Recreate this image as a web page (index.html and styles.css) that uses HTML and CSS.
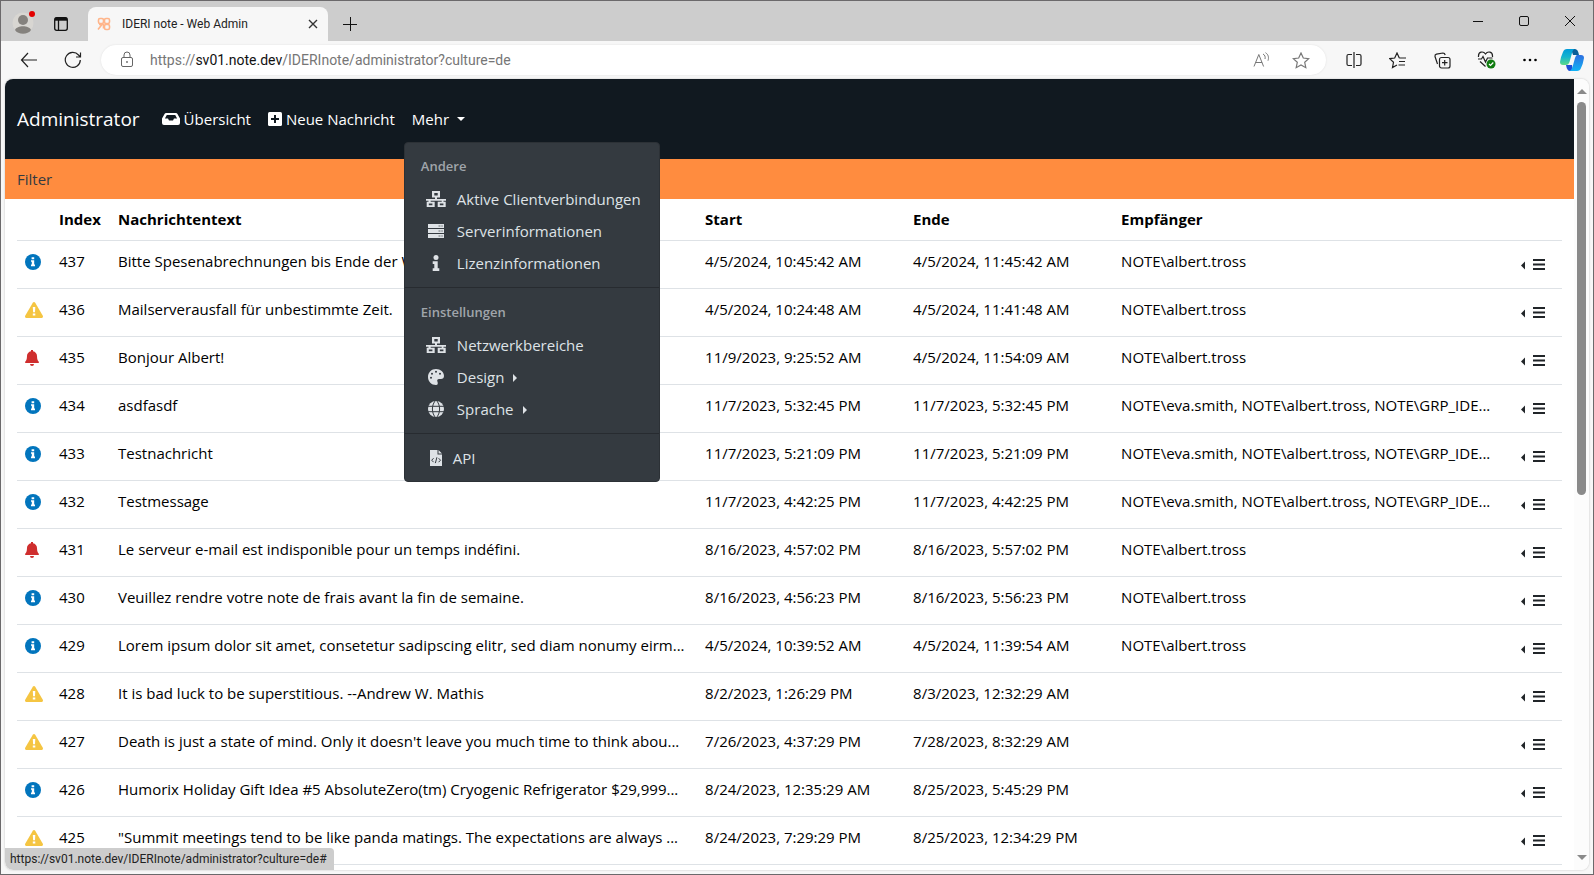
FILE: index.html
```html
<!DOCTYPE html>
<html lang="de">
<head>
<meta charset="utf-8">
<title>IDERI note - Web Admin</title>
<link rel="stylesheet" href="styles.css">
</head>
<body>
<svg class="sprite" aria-hidden="true">
  <symbol id="i-info" viewBox="0 0 16 16"><circle cx="8" cy="8" r="8" fill="#0275bd"/><path fill="#fff" d="M6.600 3.200h2.600v2H6.600zM6 6.200h3.200v4.400H10v1.600H6v-1.600h.8V7.800H6z"/></symbol>
  <symbol id="i-warn" viewBox="0 0 18 16"><path fill="#f5c542" d="M9 0c.5 0 .9.200 1.200.700l7.600 13c.5 1-.1 2.300-1.300 2.300h-15C.3 16-.3 14.700.200 13.700l7.600-13C8.100.200 8.500 0 9 0z"/><path fill="#fff" d="M7.800 5h2.500L10 10.200H8.100zM7.800 11.400h2.500v2.100H7.800z"/></symbol>
  <symbol id="i-bell" viewBox="0 0 14 16"><path fill="#cf2e2e" d="M6 0h2v1.200C10.300 1.700 12 3.500 12 6c0 3.500 1 5 1.800 5.800.4.500.2 1.200-.6 1.200H.8c-.8 0-1-.700-.6-1.200C1 11 2 9.500 2 6c0-2.500 1.700-4.300 4-4.800zM5 14h4a2 2 0 0 1-4 0z"/></symbol>
  <symbol id="i-net" viewBox="0 0 20 16"><path d="M6 0h8v6.500h-3V8h9v1.700h-2.500v1h2.200V16h-8v-5.300h4v-1h-11v1h4V16h-8v-5.300h1.800v-1H0V8h9V6.500H6zM8.300 2v2.500h3.400V2zM2.800 12.500v1.700h3.600v-1.700zm11 0v1.700h3.600v-1.700z" fill-rule="evenodd"/></symbol>
  <symbol id="i-server" viewBox="0 0 18 16"><path d="M1 1h16v4H1zM1 6h16v4H1zM1 11h16v4H1z"/><path fill="#8f9499" d="M11.500 2.300h2v1.400h-2zm2.800 0h1.500v1.400h-1.500zm-2.800 5h2v1.400h-2zm2.800 0h1.500v1.400h-1.500zm-2.800 5h2v1.400h-2zm2.800 0h1.500v1.400h-1.500z"/></symbol>
  <symbol id="i-i" viewBox="0 0 16 16"><circle cx="8" cy="2.500" r="2.500"/><path d="M4.700 6.200h5v7h1.600V16H4.700v-2.800h1.600V9H4.700z"/></symbol>
  <symbol id="i-palette" viewBox="0 0 16 16"><path fill-rule="evenodd" d="M8 0c4.500 0 8 3.100 8 7 0 1.700-1.200 3-3 3h-2c-1.500 0-2.200 1.300-1.600 2.500.7 1.700.6 3.500-1.400 3.500C3.500 16 0 12.500 0 8s3.500-8 8-8zM3 7.800a1 1 0 1 0 0 2 1 1 0 0 0 0-2zm1-4a1 1 0 1 0 0 2 1 1 0 0 0 0-2zm4-2a1 1 0 1 0 0 2 1 1 0 0 0 0-2zm4 2a1 1 0 1 0 0 2 1 1 0 0 0 0-2z"/></symbol>
  <symbol id="i-globe" viewBox="0 0 16 16"><circle cx="8" cy="8" r="8"/><path fill="none" stroke="#343a40" d="M0 5.300h16M0 10.700h16M8-1C3.200 3.500 3.200 12.500 8 17M8-1c4.800 4.500 4.800 13.500 0 18"/></symbol>
  <symbol id="i-file" viewBox="0 0 16 16"><path d="M2 0h7.500v4.500H14V16H2zM10.500 0 14 3.500h-3.500z"/><path fill="none" stroke="#343a40" d="m5.600 8.200-1.900 2 1.900 2M8.900 7.300l-1.500 5.800M10.600 8.200l1.900 2-1.900 2"/></symbol>
  <symbol id="i-lines" viewBox="0 0 24 12"><path fill="#212529" d="M0 7.500 4 3.500v8zM12 1h12v2H12zm0 4.500h12v2H12zM12 10h12v2H12z"/></symbol>
</svg>
<div class="window">
  <header class="tabs">
    <button class="icon-btn" aria-label="Profil"><svg width="24" height="24" viewBox="0 0 24 24"><circle cx="11" cy="13" r="10.500" fill="#d8d6d2"/><circle cx="11" cy="10" r="5" fill="#85827e"/><path d="M3 20c2-5 14-5 16 0-3 5-13 5-16 0z" fill="#85827e"/><circle cx="20" cy="4" r="3" fill="#e30000"/></svg></button>
    <button class="icon-btn" aria-label="Tabs"><svg width="16" height="16" viewBox="0 0 16 16" fill="none" stroke="#111" stroke-width="1.300"><rect x="1.700" y="1.700" width="12.600" height="12.600" rx="2"/><path d="M5.500 4v10"/><path d="M2 3.200h12" stroke-width="3"/></svg></button>
    <div class="tab">
      <svg width="14" height="14" viewBox="0 0 14 14" fill="none" stroke="#ffb58a" stroke-width="1.600"><rect x="1.500" y="1.500" width="5" height="5" rx="1.500"/><rect x="7.500" y="1.500" width="5" height="5" rx="1.500"/><path d="M1 12.500 5 7.500M2 7.500h4.500v4"/><rect x="7.500" y="7.500" width="5" height="5" rx="1.500"/></svg>
      <span class="tab-title">IDERI note - Web Admin</span>
      <button class="icon-btn" aria-label="Tab schließen"><svg width="10" height="10" viewBox="0 0 10 10" stroke="#333" stroke-width="1.400"><path d="m1 1 8 8M9 1 1 9"/></svg></button>
    </div>
    <button class="icon-btn new-tab" aria-label="Neuer Tab"><svg width="14" height="14" viewBox="0 0 14 14" stroke="#111"><path d="M0 7.500h14M7.500 0v14"/></svg></button>
    <div class="win-btns">
      <button class="icon-btn" aria-label="Minimieren"><svg width="12" height="12" viewBox="0 0 12 12" stroke="#111"><path d="M1 6.500h10"/></svg></button>
      <button class="icon-btn" aria-label="Maximieren"><svg width="12" height="12" viewBox="0 0 12 12" fill="none" stroke="#111"><rect x="1.500" y="1.500" width="9" height="9" rx="1.500"/></svg></button>
      <button class="icon-btn" aria-label="Schließen"><svg width="12" height="12" viewBox="0 0 12 12" stroke="#111"><path d="m1 1 10 10M11 1 1 11"/></svg></button>
    </div>
  </header>
  <div class="toolbar">
    <button class="icon-btn" aria-label="Zurück"><svg width="18" height="16" viewBox="0 0 18 16" fill="none" stroke="#222" stroke-width="1.200"><path d="M17 8H1.500M8 1 1.500 8 8 15"/></svg></button>
    <button class="icon-btn" aria-label="Neu laden"><svg width="18" height="18" viewBox="0 0 18 18" fill="none" stroke="#222" stroke-width="1.200"><path d="M16.300 9A7.500 7.500 0 1 1 14.500 4L16.500 6M16.500 1.500V6H12"/></svg></button>
    <div class="address">
      <svg width="14" height="18" viewBox="0 0 14 18" fill="none" stroke="#666"><rect x="1.500" y="6.500" width="11" height="9" rx="1.500"/><path d="M4 6.500V4a3 3 0 0 1 6 0v2.500"/><circle cx="7" cy="11" r=".6"/></svg>
      <span class="url">https://<b>sv01.note.dev</b>/IDERInote/administrator?culture=de</span>
      <button class="icon-btn" aria-label="Vorlesen"><svg width="17" height="16" viewBox="0 0 17 16" fill="none" stroke="#777"><path d="m1 14.500 4.800-12 4.800 12M2.600 10.500h6.500M10 2c2 1 2.500 3 2 5M12.500.700c3 1.800 3.500 5 2.500 8"/></svg></button>
      <button class="icon-btn" aria-label="Favorit"><svg width="18" height="17" viewBox="0 0 18 17" fill="none" stroke="#777" stroke-width="1.200"><path d="m9 1 2.300 5 5.400.600-4 3.700 1.100 5.400L9 13l-4.800 2.700 1.100-5.400-4-3.700 5.400-.6z"/></svg></button>
    </div>
    <div class="tools">
      <button class="icon-btn" aria-label="Geteilter Bildschirm"><svg width="16" height="16" viewBox="0 0 16 16" fill="none" stroke="#222" stroke-width="1.200"><path d="M6 2.500H2.500q-1.500 0-1.500 1.500v8q0 1.500 1.500 1.500H6M10 2.500h3.500Q15 2.500 15 4v8q0 1.500-1.500 1.500H10M8 0v16"/></svg></button>
      <button class="icon-btn" aria-label="Favoriten"><svg width="18" height="17" viewBox="0 0 18 17" fill="none" stroke="#222" stroke-width="1.200"><path d="M10.300 6 8 1 5.700 6l-5 .600 3.800 3.700-1 5.200L8 13M10.300 6H17M10 9.500h6M9.500 13H16"/></svg></button>
      <button class="icon-btn" aria-label="Sammlungen"><svg width="17" height="17" viewBox="0 0 17 17" fill="none" stroke="#222" stroke-width="1.200"><rect x="5.500" y="5.500" width="10.500" height="10.500" rx="2"/><path d="M10.700 8v5.500M8 10.700h5.500M3.500 12 1 4.500Q.7 2.700 2.500 2.200L9 1q1.700 0 2.200 2"/></svg></button>
      <button class="icon-btn" aria-label="Browser-Essentials"><svg width="19" height="18" viewBox="0 0 19 18" fill="none" stroke="#222" stroke-width="1.200"><path d="M1.500 6C1 0 6.500 0 8.500 3c2-3 7.500-3 7 3M1 8h3.500L6 5.500 8.500 11 10.500 7h5M3 10.500l5.500 5"/><circle cx="14" cy="13" r="4.500" fill="#107c10" stroke="none"/><path d="m12 13 1.500 1.500L16.300 11.500" stroke="#fff"/></svg></button>
      <button class="icon-btn" aria-label="Einstellungen"><svg width="16" height="4" viewBox="0 0 16 4"><circle cx="2.500" cy="2" r="1.300"/><circle cx="8" cy="2" r="1.300"/><circle cx="13.500" cy="2" r="1.300"/></svg></button>
      <button class="icon-btn copilot" aria-label="Copilot"><svg width="24" height="24" viewBox="0 0 24 24"><defs><linearGradient id="ca" x2="0" y2="1"><stop stop-color="#009bd9"/><stop offset=".5" stop-color="#15b5cf"/><stop offset="1" stop-color="#5dda87"/></linearGradient><linearGradient id="cb" x2="0" y2="1"><stop stop-color="#2e6fe0"/><stop offset="1" stop-color="#12b3f5"/></linearGradient></defs><path fill="#0c5f98" d="M11 1h4q3 0 4 6h-6z"/><path fill="url(#ca)" d="M7 1h8q-2 0-3 4L9.500 14Q8.500 17 6 17H3q-3 0-3-3 1-6 3-10 1-3 4-3z"/><path fill="#1d4fd7" d="M6 17h6l1 6h-3q-3 0-4-6z"/><path fill="url(#cb)" d="M17 7h4q3 0 3 3-1 6-3 10-1 3-4 3H9.500q2-1 3-4L15 10q1-3 2-3z"/></svg></button>
    </div>
  </div>
  <div class="viewport">
    <div class="page">
      <nav class="navbar">
        <a class="brand" href="#">Administrator</a>
        <a href="#"><svg width="18" height="14" viewBox="0 0 18 14" fill="#fff"><path fill-rule="evenodd" d="M4 1h10q.8 0 1.300.800L18 6.500V11q0 2-2 2H2q-2 0-2-2V6.500L2.700 1.800Q3.200 1 4 1zm.800 2L2.900 6.500H6L7 8.500h4L12 6.500h3.100L13.200 3z"/></svg>Übersicht</a>
        <a href="#"><svg width="14" height="14" viewBox="0 0 14 14"><rect width="14" height="14" rx="1.500" fill="#fff"/><path d="M7 3v8M3 7h8" stroke="#111920" stroke-width="2"/></svg>Neue Nachricht</a>
        <div class="more">
          <a href="#" class="more-link">Mehr<span class="caret"></span></a>
          <div class="menu">
            <h6>Andere</h6>
            <a href="#"><svg width="20" height="16"><use href="#i-net"/></svg>Aktive Clientverbindungen</a>
            <a href="#"><svg width="20" height="16"><use href="#i-server"/></svg>Serverinformationen</a>
            <a href="#"><svg width="20" height="16"><use href="#i-i"/></svg>Lizenzinformationen</a>
            <hr>
            <h6>Einstellungen</h6>
            <a href="#"><svg width="20" height="16"><use href="#i-net"/></svg>Netzwerkbereiche</a>
            <a href="#"><svg width="20" height="16"><use href="#i-palette"/></svg>Design<span class="caret-r"></span></a>
            <a href="#"><svg width="20" height="16"><use href="#i-globe"/></svg>Sprache<span class="caret-r"></span></a>
            <hr>
            <a href="#" class="api"><svg width="20" height="16"><use href="#i-file"/></svg>API</a>
          </div>
        </div>
      </nav>
      <div class="filter">Filter</div>
      <main class="content">
        <table>
          <colgroup><col class="c-icon"><col class="c-index"><col class="c-text"><col class="c-date"><col class="c-date"><col class="c-to"><col class="c-act"></colgroup>
          <thead><tr><th></th><th>Index</th><th>Nachrichtentext</th><th>Start</th><th>Ende</th><th>Empfänger</th><th></th></tr></thead>
          <tbody id="rows"></tbody>
        </table>
      </main>
    </div>
    <div class="scrollbar"><span class="up"></span><span class="thumb"></span><span class="down"></span></div>
    <div class="status">https://sv01.note.dev/IDERInote/administrator?culture=de#</div>
  </div>
</div>
<script src="rows.js"></script>
</body>
</html>
```
FILE: rows.js
```js
const albert = "NOTE\\albert.tross";
const group = "NOTE\\eva.smith, NOTE\\albert.tross, NOTE\\GRP_IDE...";
const messages = [
  ["info", 437, "Bitte Spesenabrechnungen bis Ende der W...", "4/5/2024, 10:45:42 AM", "4/5/2024, 11:45:42 AM", albert],
  ["warn", 436, "Mailserverausfall für unbestimmte Zeit.", "4/5/2024, 10:24:48 AM", "4/5/2024, 11:41:48 AM", albert],
  ["bell", 435, "Bonjour Albert!", "11/9/2023, 9:25:52 AM", "4/5/2024, 11:54:09 AM", albert],
  ["info", 434, "asdfasdf", "11/7/2023, 5:32:45 PM", "11/7/2023, 5:32:45 PM", group],
  ["info", 433, "Testnachricht", "11/7/2023, 5:21:09 PM", "11/7/2023, 5:21:09 PM", group],
  ["info", 432, "Testmessage", "11/7/2023, 4:42:25 PM", "11/7/2023, 4:42:25 PM", group],
  ["bell", 431, "Le serveur e-mail est indisponible pour un temps indéfini.", "8/16/2023, 4:57:02 PM", "8/16/2023, 5:57:02 PM", albert],
  ["info", 430, "Veuillez rendre votre note de frais avant la fin de semaine.", "8/16/2023, 4:56:23 PM", "8/16/2023, 5:56:23 PM", albert],
  ["info", 429, "Lorem ipsum dolor sit amet, consetetur sadipscing elitr, sed diam nonumy eirm...", "4/5/2024, 10:39:52 AM", "4/5/2024, 11:39:54 AM", albert],
  ["warn", 428, "It is bad luck to be superstitious. --Andrew W. Mathis", "8/2/2023, 1:26:29 PM", "8/3/2023, 12:32:29 AM", ""],
  ["warn", 427, "Death is just a state of mind. Only it doesn't leave you much time to think abou...", "7/26/2023, 4:37:29 PM", "7/28/2023, 8:32:29 AM", ""],
  ["info", 426, "Humorix Holiday Gift Idea #5 AbsoluteZero(tm) Cryogenic Refrigerator $29,999...", "8/24/2023, 12:35:29 AM", "8/25/2023, 5:45:29 PM", ""],
  ["warn", 425, "\"Summit meetings tend to be like panda matings. The expectations are always ...", "8/24/2023, 7:29:29 PM", "8/25/2023, 12:34:29 PM", ""]
];
const widths = { info: 16, warn: 18, bell: 14 };
document.getElementById("rows").innerHTML = messages.map(([icon, ...cells]) =>
  `<tr><td><svg width="${widths[icon]}" height="16"><use href="#i-${icon}"/></svg></td>` +
  cells.map(c => `<td>${c}</td>`).join("") +
  `<td><button class="icon-btn" aria-label="Aktionen"><svg width="24" height="12"><use href="#i-lines"/></svg></button></td></tr>`
).join("");
```
FILE: styles.css
```css
* { box-sizing: border-box; }
html, body { height: 100%; }
body { margin: 0; font-family: "Open Sans", "Noto Sans", sans-serif; font-size: 15px; line-height: 24px; color: #000; }
a { color: inherit; text-decoration: none; }
.sprite { position: absolute; width: 0; height: 0; }
.window { height: 100vh; display: flex; flex-direction: column; border: 1px solid #6b696b; background: #f7f7f7; overflow: hidden; }
.icon-btn { display: inline-flex; align-items: center; justify-content: center; padding: 0; border: 0; background: none; }
.icon-btn svg { display: block; }

.tabs { flex: none; height: 40px; display: flex; align-items: center; background: #cdcdcd; padding-left: 11px; }
.tabs > .icon-btn { padding-top: 6px; }
.tabs > .icon-btn:first-child { padding-top: 2px; }
.tabs > .icon-btn:nth-child(2) { margin-left: 17px; }
.tab { align-self: flex-end; height: 34px; width: 240px; margin-left: 19px; padding: 0 10px 0 9px; display: flex; align-items: center; gap: 11px; background: #f7f7f7; border-radius: 8px 8px 0 0; font-family: Roboto, sans-serif; font-size: 12px; color: #222; }
.tab-title { flex: 1; }
.new-tab { margin-left: 15px; }
.win-btns { margin-left: auto; display: flex; }
.win-btns .icon-btn { width: 46px; height: 40px; }

.toolbar { flex: none; height: 38px; display: flex; align-items: center; padding: 0 1px 0 19px; }
.toolbar > .icon-btn + .icon-btn { margin-left: 26px; }
.address { flex: 1; height: 30px; margin-left: 19px; padding: 0 16px 0 19px; display: flex; align-items: center; background: #fff; border-radius: 15px; box-shadow: 0 0 2px #ddd; }
.url { flex: 1; margin-left: 16px; font-family: Roboto, sans-serif; font-size: 14px; color: #767676; }
.url b { font-weight: 400; color: #111; }
.address .icon-btn + .icon-btn { margin-left: 22px; }
.tools { display: flex; align-items: center; margin-left: 6px; }
.tools .icon-btn { width: 44px; height: 30px; }
.tools .copilot { width: 40px; }

.viewport { flex: 1; min-height: 0; margin: 0 4px 4px; display: flex; position: relative; background: #fff; border-radius: 8px; overflow: hidden; box-shadow: 0 0 2px #bbb; }
.page { flex: 1; min-width: 0; overflow: hidden; }
.navbar { height: 80px; display: flex; align-items: center; padding: 0 12px; background: #111920; color: #fff; }
.navbar > a { display: flex; align-items: center; gap: 4px; margin-right: 17px; }
.navbar > .brand { font-size: 19px; margin-right: 22px; }
.more { position: relative; }
.more-link { display: flex; align-items: center; gap: 8px; }
.caret { border: 4px solid transparent; border-top-color: #fff; border-bottom: 0; }
.menu { position: absolute; top: 35px; left: -8px; width: 256px; padding: 8px 0 7px; background: #343a40; border: 1px solid #2c3136; border-radius: 4px; color: #dee2e6; z-index: 2; }
.menu h6 { margin: 0; padding: 4px 16px 6px; font-size: 13px; line-height: 22px; font-weight: 600; color: #a0a5ab; }
.menu hr + h6 { padding-top: 5px; }
.menu a { display: flex; align-items: center; height: 32px; padding-left: 21px; white-space: nowrap; }
.menu a svg { margin-right: 11px; fill: #dee2e6; }
.menu .api svg { margin-right: 7px; }
.menu hr { margin: 8px 0; border: 0; border-top: 1px solid #272b30; }
.caret-r { margin: 2px 0 0 9px; border: 4px solid transparent; border-left-color: #dee2e6; border-right: 0; }

.filter { height: 40px; padding: 8px 12px; background: #ff8c3f; color: #343a40; }
.content { padding: 0 12px; }
table { width: 100%; table-layout: fixed; border-collapse: collapse; }
.c-icon { width: 34px; }
.c-index { width: 59px; }
.c-text { width: 38%; }
.c-date { width: 208px; }
.c-act { width: 50px; }
th, td { padding: 8px; text-align: left; vertical-align: top; border-bottom: 1px solid #dee2e6; white-space: nowrap; }
th { height: 41px; padding-bottom: 7px; font-weight: 700; }
td { height: 48px; overflow: hidden; text-overflow: ellipsis; }
td:first-child svg { display: block; margin-top: 5px; }
td:last-child { padding: 11px 0 0 9px; }

.scrollbar { width: 15px; display: flex; flex-direction: column; align-items: center; padding: 10px 0; background: #fcfcfc; }
.up { border: 5px solid transparent; border-bottom-color: #8a8a8a; border-top: 0; }
.thumb { width: 9px; height: 51%; margin-top: 8px; border-radius: 5px; background: #8a8a8a; }
.down { margin-top: auto; border: 5px solid transparent; border-top-color: #8a8a8a; border-bottom: 0; }
.status { position: absolute; left: 0; bottom: 0; height: 22px; padding: 0 7px 0 5px; background: #cdcdcd; border-radius: 0 4px 0 8px; font-family: Roboto, sans-serif; font-size: 12px; line-height: 22px; color: #222; }
```
